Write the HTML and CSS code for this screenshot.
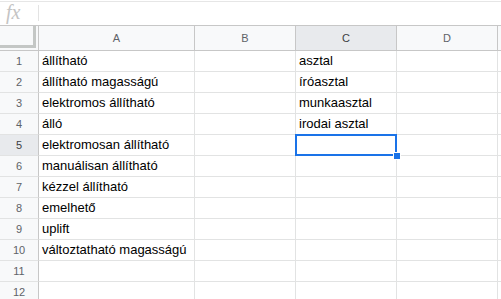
FILE: index.html
```html
<!DOCTYPE html>
<html lang="hu">
<head>
    <meta charset="UTF-8">
    <meta name="viewport" content="width=device-width, initial-scale=1.0">
    <title>Táblázat</title>
    <link rel="stylesheet" href="styles.css">
</head>
<body>
    <div class="formula-bar">
        <span class="fx">fx</span>
        <span class="divider"></span>
    </div>

    <div class="sheet">
        <div class="hdr corner"></div>
        <div class="hdr col">A</div>
        <div class="hdr col">B</div>
        <div class="hdr col active">C</div>
        <div class="hdr col">D</div>
        <div class="hdr col last"></div>

        <div class="num">1</div><div class="cell">állítható</div><div class="cell"></div><div class="cell">asztal</div><div class="cell"></div><div class="cell last"></div>
        <div class="num">2</div><div class="cell">állítható magasságú</div><div class="cell"></div><div class="cell">íróasztal</div><div class="cell"></div><div class="cell last"></div>
        <div class="num">3</div><div class="cell">elektromos állítható</div><div class="cell"></div><div class="cell">munkaasztal</div><div class="cell"></div><div class="cell last"></div>
        <div class="num">4</div><div class="cell">álló</div><div class="cell"></div><div class="cell">irodai asztal</div><div class="cell"></div><div class="cell last"></div>
        <div class="num active">5</div><div class="cell">elektromosan állítható</div><div class="cell"></div><div class="cell selected"><span class="handle"></span></div><div class="cell"></div><div class="cell last"></div>
        <div class="num">6</div><div class="cell">manuálisan állítható</div><div class="cell"></div><div class="cell"></div><div class="cell"></div><div class="cell last"></div>
        <div class="num">7</div><div class="cell">kézzel állítható</div><div class="cell"></div><div class="cell"></div><div class="cell"></div><div class="cell last"></div>
        <div class="num">8</div><div class="cell">emelhető</div><div class="cell"></div><div class="cell"></div><div class="cell"></div><div class="cell last"></div>
        <div class="num">9</div><div class="cell">uplift</div><div class="cell"></div><div class="cell"></div><div class="cell"></div><div class="cell last"></div>
        <div class="num">10</div><div class="cell">változtatható magasságú</div><div class="cell"></div><div class="cell"></div><div class="cell"></div><div class="cell last"></div>
        <div class="num">11</div><div class="cell"></div><div class="cell"></div><div class="cell"></div><div class="cell"></div><div class="cell last"></div>
        <div class="num">12</div><div class="cell"></div><div class="cell"></div><div class="cell"></div><div class="cell"></div><div class="cell last"></div>
    </div>
</body>
</html>
```

FILE: styles.css
```css
* {
    margin: 0;
    padding: 0;
    box-sizing: border-box;
}

body {
    font-family: 'Liberation Sans', Arial, sans-serif;
    background: white;
    color: #000;
    width: 501px;
    height: 299px;
    overflow: hidden;
}

.formula-bar {
    height: 24px;
    margin-top: 1px;
    border-top: 1px solid #e6e6e6;
    display: flex;
    align-items: center;
}

.fx {
    width: 38px;
    padding-left: 6px;
    font-family: 'Liberation Serif', serif;
    font-style: italic;
    font-size: 20px;
    color: #c4c4c4;
    line-height: 1;
    margin-top: -3px;
}

.divider {
    width: 1px;
    height: 16px;
    background: #e3e3e3;
    margin-top: -2px;
}

.sheet {
    display: grid;
    grid-template-columns: 39px 156px 101px 101px 101px 1fr;
    grid-template-rows: 25px;
    grid-auto-rows: 21px;
    border-top: 1px solid #c7c7c7;
}

.hdr {
    background: #f8f9fa;
    border-right: 1px solid #c7c7c7;
    border-bottom: 1px solid #c7c7c7;
    font-size: 11px;
    color: #5f6368;
    display: flex;
    align-items: center;
    justify-content: center;
}

.corner {
    position: relative;
}

.corner::before {
    content: '';
    position: absolute;
    right: 2px;
    top: 0;
    bottom: 2px;
    width: 3px;
    background: #c4c7c5;
}

.corner::after {
    content: '';
    position: absolute;
    left: 0;
    right: 2px;
    bottom: 2px;
    height: 3px;
    background: #c4c7c5;
}

.hdr.active,
.num.active {
    background: #e8eaed;
    color: #3c4043;
}

.num {
    background: #f8f9fa;
    border-right: 1px solid #c7c7c7;
    border-bottom: 1px solid #e2e3e3;
    font-size: 11px;
    color: #5f6368;
    display: flex;
    align-items: center;
    justify-content: center;
}

.cell {
    border-right: 1px solid #e2e3e3;
    border-bottom: 1px solid #e2e3e3;
    font-size: 13px;
    line-height: 20px;
    padding-left: 3px;
    white-space: nowrap;
    overflow: hidden;
}

.cell.selected {
    position: relative;
    overflow: visible;
}

.selected::before {
    content: '';
    position: absolute;
    left: -1px;
    top: -1px;
    right: -1px;
    bottom: -1px;
    border: 2px solid #1a73e8;
}

.handle {
    position: absolute;
    right: -5px;
    bottom: -5px;
    width: 8px;
    height: 8px;
    background: #1a73e8;
    border: 1px solid white;
    z-index: 2;
}
```
